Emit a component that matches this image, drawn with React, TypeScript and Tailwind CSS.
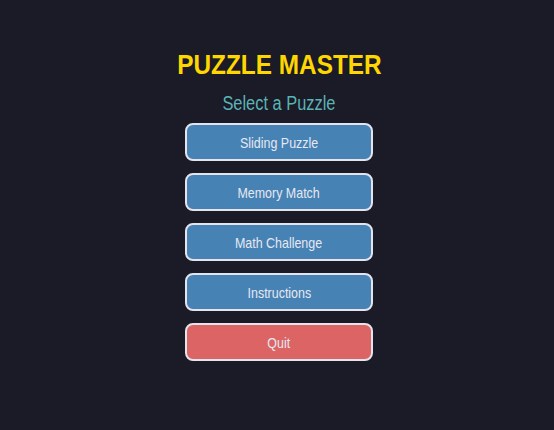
const menuItems = [
  { label: "Sliding Puzzle", tone: "bg-[#4682b4]" },
  { label: "Memory Match", tone: "bg-[#4682b4]" },
  { label: "Math Challenge", tone: "bg-[#4682b4]" },
  { label: "Instructions", tone: "bg-[#4682b4]" },
  { label: "Quit", tone: "bg-[#dc6464]" },
]

export default function App() {
  return (
    <div
      className="w-[554px] h-[430px] bg-[#1b1a27] flex flex-col items-center pt-[51px] pl-[4px]"
      style={{ fontFamily: '"Liberation Sans", Arial, sans-serif' }}
    >
      <h1 className="text-[28px] leading-none font-bold text-[#ffd700] scale-x-[0.87]">
        PUZZLE MASTER
      </h1>
      <p className="mt-[14px] text-[20px] leading-none text-[#5ab4b4] scale-x-[0.82]">
        Select a Puzzle
      </p>

      <div className="mt-[10px] flex flex-col gap-3">
        {menuItems.map((item) => (
          <button
            key={item.label}
            className={`w-[188px] h-[38px] rounded-lg border-2 border-[#e4e4ee] ${item.tone} flex items-center justify-center`}
          >
            <span className="inline-block text-[15px] leading-none text-[#e6e8f2] scale-x-[0.83]">
              {item.label}
            </span>
          </button>
        ))}
      </div>
    </div>
  )
}
